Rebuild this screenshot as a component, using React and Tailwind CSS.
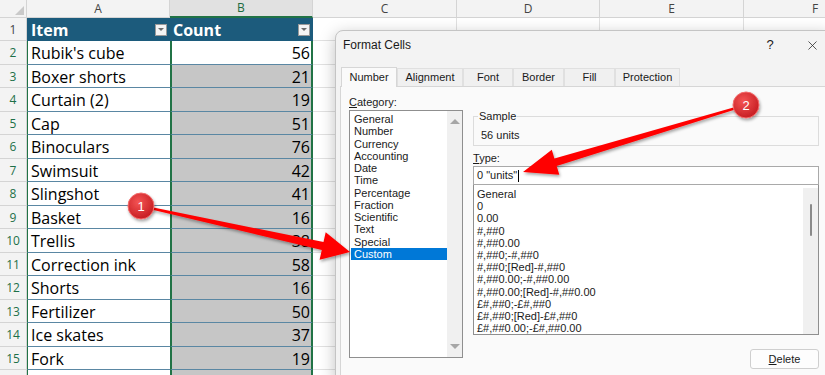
import { X } from 'lucide-react'

const items = [
  ["Rubik's cube", 56],
  ['Boxer shorts', 21],
  ['Curtain (2)', 19],
  ['Cap', 51],
  ['Binoculars', 76],
  ['Swimsuit', 42],
  ['Slingshot', 41],
  ['Basket', 16],
  ['Trellis', 38],
  ['Correction ink', 58],
  ['Shorts', 16],
  ['Fertilizer', 50],
  ['Ice skates', 37],
  ['Fork', 19],
  ['', ''],
]

const categories = ['General', 'Number', 'Currency', 'Accounting', 'Date', 'Time', 'Percentage', 'Fraction', 'Scientific', 'Text', 'Special', 'Custom']

const types = [
  'General', '0', '0.00', '#,##0', '#,##0.00', '#,##0;-#,##0', '#,##0;[Red]-#,##0',
  '#,##0.00;-#,##0.00', '#,##0.00;[Red]-#,##0.00', '£#,##0;-£#,##0', '£#,##0;[Red]-£#,##0',
  '£#,##0.00;-£#,##0.00',
]

const tabs = [
  ['Number', 'w-[56px]'],
  ['Alignment', 'w-[66px]'],
  ['Font', 'w-[50px]'],
  ['Border', 'w-[51px]'],
  ['Fill', 'w-[51px]'],
  ['Protection', 'w-[65px]'],
]

const rest = ['w-[144px]', 'w-[143px]', 'w-[144px]', 'w-[143px]']

function FilterBtn() {
  return (
    <div className="w-[12px] h-[12px] shrink-0 bg-[#f4f4f4] border border-[#9a9a9a] flex items-center justify-center">
      <div className="w-0 h-0 border-l-[3px] border-r-[3px] border-t-[3px] border-l-transparent border-r-transparent border-t-[#6b6b6b]" />
    </div>
  )
}

function Sheet() {
  return (
    <div className="flex flex-col font-['Open_Sans',sans-serif] text-black">
      {/* column headers */}
      <div className="flex h-[18px] text-[12px] text-[#444]">
        <div className="w-[27px] shrink-0 bg-[#f3f3f3] border-r border-b border-[#d4d4d4] flex items-end justify-end p-[2px]">
          <svg width="9" height="9"><polygon points="9,0 9,9 0,9" fill="#c9c9c9" /></svg>
        </div>
        <div className="w-[143px] shrink-0 bg-[#f3f3f3] border-r border-b border-[#d4d4d4] flex items-center justify-center">A</div>
        <div className="w-[143px] shrink-0 bg-[#e1e1e1] border-r border-[#d4d4d4] border-b-2 border-b-[#217346] text-[#1d6b40] flex items-center justify-center">B</div>
        {['C', 'D', 'E', 'F'].map((c, i) => (
          <div key={c} className={`${rest[i]} shrink-0 bg-[#f3f3f3] border-r border-b border-[#d4d4d4] flex items-center justify-center`}>{c}</div>
        ))}
      </div>

      {/* row 1 */}
      <div className="flex h-[23px]">
        <div className="w-[27px] shrink-0 bg-[#f3f3f3] border-r border-b border-[#d4d4d4] text-[12px] text-[#444] flex items-center justify-center pt-[2px]">1</div>
        <div className="w-[143px] shrink-0 bg-[#1c5b7c] flex items-center justify-between pl-[4px] pr-[3px] text-white font-bold text-[16px]">
          <span>Item</span>
          <FilterBtn />
        </div>
        <div className="w-[143px] shrink-0 bg-[#1c5b7c] flex items-center justify-between pl-[3px] pr-[3px] text-white font-bold text-[16px]">
          <span>Count</span>
          <FilterBtn />
        </div>
        {rest.map((w, i) => (
          <div key={i} className={`${w} shrink-0 bg-white border-r border-b border-[#e1e1e1]`} />
        ))}
      </div>

      {items.map(([name, n], i) => (
        <div key={i} className="flex h-[23.5px]">
          <div className="w-[27px] shrink-0 bg-[#f3f3f3] border-r border-b border-[#d4d4d4] text-[12px] text-[#1d7048] flex items-center justify-center pt-[2px]">{i < 14 ? i + 2 : ''}</div>
          <div className="w-[143px] shrink-0 bg-white border-l border-l-[#217346] border-b border-b-[#5a87a3] flex items-center pl-[3px] pt-[2px] text-[16px]">{name}</div>
          <div className={`w-[143px] shrink-0 ${i === 0 ? 'bg-white' : 'bg-[#c6c6c6]'} border-x-2 border-x-[#217346] border-b border-b-[#5a87a3] flex items-center justify-end pr-[1px] pt-[2px] text-[16px]`}>{n}</div>
          {rest.map((w, j) => (
            <div key={j} className={`${w} shrink-0 bg-white border-r border-b border-[#e1e1e1]`} />
          ))}
        </div>
      ))}
    </div>
  )
}

function Dialog() {
  return (
    <div className="absolute left-[335px] top-[30px] w-[495px] h-[350px] bg-[#f3f3f3] border border-[#c4c4c4] rounded-tl-[8px] shadow-[0_4px_16px_rgba(0,0,0,0.25)] font-['Liberation_Sans',Arial,sans-serif] text-[11px] text-[#1a1a1a] flex flex-col">
      {/* title bar */}
      <div className="h-[35px] flex items-start pt-[6px] pl-[7px] pr-[7px]">
        <span className="text-[12px] leading-[16px]">Format Cells</span>
        <div className="flex-1" />
        <span className="w-[20px] text-center text-[13px] leading-[16px]">?</span>
        <div className="w-[22px]" />
        <div className="w-[20px] h-[16px] flex items-center justify-center">
          <X size={15} strokeWidth={1.2} color="#222" />
        </div>
      </div>

      {/* tabs */}
      <div className="flex items-end h-[20px] pl-[5px]">
        {tabs.map(([t, w], i) => (
          <div
            key={t}
            className={`${w} flex items-center justify-center border-t border-x ${i === 0 ? 'h-[20px] bg-[#fafafa] border-[#d6d6d6] relative top-[1px]' : 'h-[18px] bg-[#f0f0f0] border-[#e0e0e0]'}`}
          >
            {t}
          </div>
        ))}
      </div>

      {/* panel */}
      <div className="flex-1 ml-[4px] bg-[#fafafa] border-t border-l border-[#d6d6d6] flex gap-[10px] pl-[8px] pt-[8px]">
        {/* category */}
        <div className="flex flex-col w-[114px]">
          <div className="h-[14px] leading-[14px]"><span className="underline">C</span>ategory:</div>
          <div className="mt-[1px] h-[248px] bg-white border border-[#8f8f8f] flex">
            <div className="flex-1 flex flex-col pt-[2px] pl-[1px]">
              {categories.map(c => (
                <div key={c} className={`leading-[12.25px] h-[12.25px] pl-[3px] ${c === 'Custom' ? 'bg-[#0078d7] text-white' : ''}`}>{c}</div>
              ))}
            </div>
            <div className="w-[15px] bg-[#f0f0f0] flex flex-col items-center justify-between py-[8px]">
              <div className="w-0 h-0 border-l-[5px] border-r-[5px] border-b-[5px] border-l-transparent border-r-transparent border-b-[#a6a6a6]" />
              <div className="w-0 h-0 border-l-[5px] border-r-[5px] border-t-[5px] border-l-transparent border-r-transparent border-t-[#a6a6a6]" />
            </div>
          </div>
        </div>

        {/* right side */}
        <div className="flex flex-col w-[346px] pt-[14px]">
          <fieldset className="border border-[#dcdcdc] pl-[4px] pb-[3px]">
            <legend className="px-[1px] leading-[14px]">Sample</legend>
            <div className="pl-[3px] pt-[5px] leading-[14px]">56 units</div>
          </fieldset>
          <div className="mt-[5px] h-[14px] leading-[14px]"><span className="underline">T</span>ype:</div>
          <div className="mt-[1px] h-[19px] bg-white border border-[#a9a9a9] flex items-center pl-[3px]">
            <span>0 "units"</span>
            <span className="w-[1px] h-[12px] bg-black ml-[1px]" />
          </div>
          <div className="h-[150px] bg-white border border-t-0 border-[#8f8f8f] flex">
            <div className="flex-1 flex flex-col pt-[3px] pl-[3px]">
              {types.map(t => (
                <div key={t} className="leading-[12.2px] h-[12.2px] whitespace-nowrap">{t}</div>
              ))}
            </div>
            <div className="w-[15px] mt-[3px] bg-[#f0f0f0] flex justify-center pt-[16px]">
              <div className="w-[2px] h-[32px] rounded-full bg-[#8a8a8a]" />
            </div>
          </div>
          <div className="self-end mt-[14px] w-[69px] h-[20px] rounded-[3px] border border-[#cfcfcf] bg-[#fdfdfd] flex items-center justify-center">
            <span><span className="underline">D</span>elete</span>
          </div>
        </div>
      </div>
    </div>
  )
}

function arrowPoints([x0, y0], [x1, y1], L, H, w0, w1) {
  const dx = x1 - x0, dy = y1 - y0, len = Math.hypot(dx, dy)
  const ux = dx / len, uy = dy / len, nx = -uy, ny = ux
  const bx = x1 - ux * L, by = y1 - uy * L
  const p = [
    [x0 + nx * w0 / 2, y0 + ny * w0 / 2],
    [bx + nx * w1 / 2, by + ny * w1 / 2],
    [bx + nx * H, by + ny * H],
    [x1, y1],
    [bx - nx * H, by - ny * H],
    [bx - nx * w1 / 2, by - ny * w1 / 2],
    [x0 - nx * w0 / 2, y0 - ny * w0 / 2],
  ]
  return p.map(q => q.map(v => v.toFixed(1)).join(',')).join(' ')
}

function Badge({ x, y, n }) {
  return (
    <g>
      <circle cx={x} cy={y} r="13" fill="url(#badge)" stroke="#f36a6a" strokeWidth="1" filter="url(#shadow)" />
      <text x={x} y={y + 4.5} textAnchor="middle" fill="white" fontSize="13" fontFamily="Liberation Sans, Arial, sans-serif">{n}</text>
    </g>
  )
}

function Annotations() {
  return (
    <svg className="absolute left-0 top-0 pointer-events-none" width="825" height="375">
      <defs>
        <radialGradient id="badge" cx="40%" cy="35%" r="70%">
          <stop offset="0%" stopColor="#f45454" />
          <stop offset="100%" stopColor="#c41a1f" />
        </radialGradient>
        <filter id="shadow" x="-30%" y="-30%" width="160%" height="160%">
          <feDropShadow dx="1" dy="2" stdDeviation="1.5" floodColor="#000" floodOpacity="0.35" />
        </filter>
      </defs>
      <polygon points={arrowPoints([141, 206], [350, 252], 28, 14, 2, 8)} fill="#ff0000" filter="url(#shadow)" />
      <polygon points={arrowPoints([746, 105], [523, 172], 34, 13, 2, 8)} fill="#ff0000" filter="url(#shadow)" />
      <Badge x={141} y={206} n="1" />
      <Badge x={746} y={105} n="2" />
    </svg>
  )
}

export default function App() {
  return (
    <div className="relative w-[825px] h-[375px] overflow-hidden bg-white">
      <Sheet />
      <Dialog />
      <Annotations />
    </div>
  )
}
